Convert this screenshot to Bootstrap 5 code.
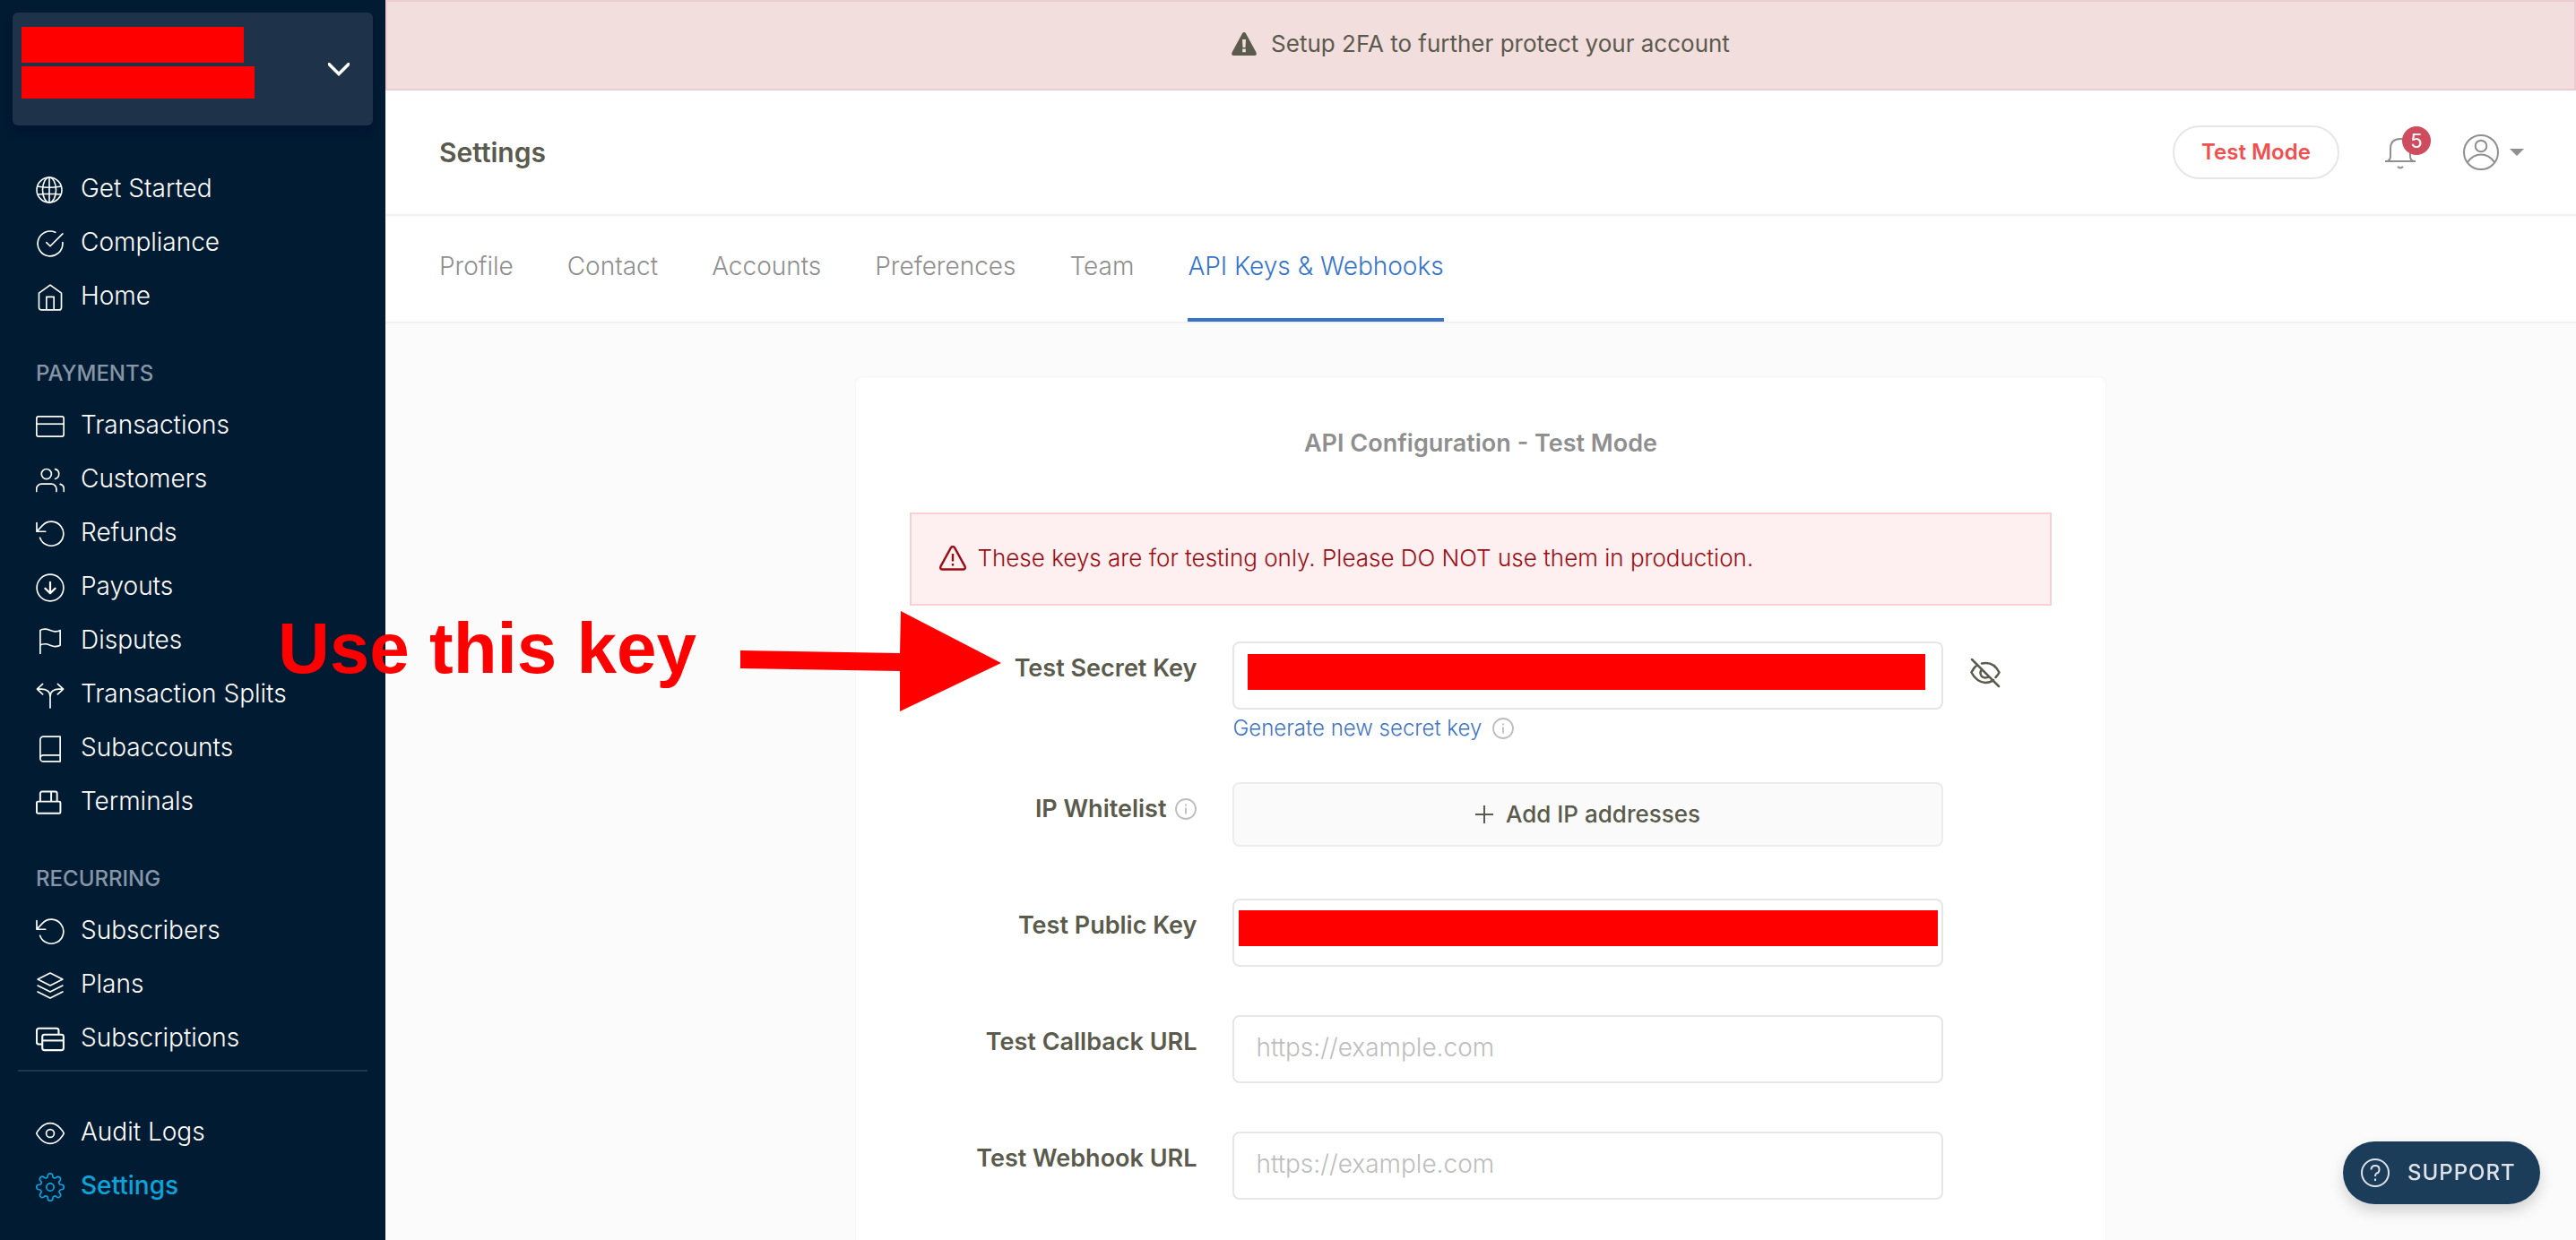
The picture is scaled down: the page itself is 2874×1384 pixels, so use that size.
<!DOCTYPE html>
<html lang="en">
<head>
<meta charset="utf-8">
<meta name="viewport" content="width=device-width, initial-scale=1">
<title>Settings</title>
<link href="https://cdn.jsdelivr.net/npm/bootstrap@5.3.0/dist/css/bootstrap.min.css" rel="stylesheet">
<style>
body{font-family:Inter,"Liberation Sans",sans-serif;font-size:26px;line-height:40px;color:#5a5a4d;background:#fbfbfb}
svg{fill:none;stroke:currentColor;flex:none;display:block}
svg.info{stroke:#bdbdbd}
a{text-decoration:none}
.side{width:430px;background:#011b33}
.biz{margin:14px;height:126px;padding:16px 26px 16px 10px;background:#1e334a;border:0;border-radius:6px;box-shadow:0 8px 10px rgba(0,0,40,.2)}
.redact{background:#f00}
.biz .redact{display:block;width:248px;height:40px}
.biz .redact + .redact{width:260px;height:36px;margin-top:4px}
.biz svg{margin-top:40px}
.side-nav{margin-top:26px}
.side-nav a{display:flex;align-items:center;height:60px;padding-left:40px;color:#fff;gap:18px;font-size:28px;font-weight:300}
.side-nav a svg{margin-top:3px}
.side-nav a.current{color:#0ba4db;font-weight:500}
.side-nav h6{margin:0;padding:43px 0 13px 40px;font-size:24px;line-height:28px;font-weight:500;color:#8696a7}
.side hr{margin:6px 20px 37px;border-top:2px solid #334a63;opacity:.6}
.notice{height:101px;border:2px solid #edccd1;background:#f2dedd;gap:16px;padding-bottom:3px}
.topbar{height:140px;border-bottom:2px solid #f2f2f2;padding:0 58px 0 60px;background:#fff}
.topbar h1{margin:0;font-size:30px;font-weight:600}
.mode{width:186px;height:60px;border:2px solid #e6e6e6;border-radius:30px;background:#fff;color:#f04f50;font-size:24px;font-weight:600;padding:0}
.gray{color:#8f8f8f}
.bell{margin:0 52px 0 50px;padding:2px 0 0;width:36px}
.bell .count{position:absolute;left:20px;top:-10px;width:32px;height:32px;border-radius:50%;background:#cf4b5e;color:#fff;font-size:22px;line-height:32px}
.tabs{height:120px;border-bottom:2px solid #f2f2f2;background:#fff;padding:0 60px;gap:60px;font-size:28px;font-weight:300}
.tabs a{color:#8f8f8f;padding-top:36px;border-bottom:4px solid transparent}
.tabs a.current{color:#3674c9;border-color:#3674c9}
.panel{width:57%;margin:60px auto 0;background:#fff;border-radius:8px;padding:54px 60px 120px;box-shadow:0 0 3px rgba(0,0,0,.06)}
.panel h2{margin:0 0 57px;font-size:27px;line-height:40px;font-weight:600;color:#8f8f8f}
.warnbox{height:104px;border:2px solid #fccfd2;background:#feeff0;color:#9c0d12;padding:0 31px 2px;gap:12px;margin-bottom:40px;font-weight:300}
.field{display:grid;grid-template-columns:320px 1fr 121px;margin-bottom:54px}
.field > label{font-size:27px;font-weight:600;padding-top:10px;display:flex;justify-content:flex-end;gap:10px;align-items:center;height:50px}
.mid{margin-left:40px;position:relative}
.mid input{height:76px;border:2px solid #e6e6e6;border-radius:8px;font-size:28px;font-weight:300;padding:0 24px 4px;background:#fff}
.mid input::placeholder{color:#bdbdbd}
.mid .redact{position:absolute;left:7px;right:6px;top:13px;height:40px}
.mid .redact.inset{left:17px;right:20px;top:14px}
.gen{font-size:24px;color:#3f74c6;gap:12px;height:41px;font-weight:300}
.addip{width:100%;height:72px;border:2px solid #ececec;border-radius:8px;background:#fafafa;color:#5a5a4d;font-weight:500;gap:14px}
.field.short{margin-bottom:58px}
.field.first{margin-bottom:40px}
.eye{margin:18px 0 0 30px;padding:0;border:0;background:none;color:#5a5a4d;align-self:start}
.support{position:fixed;right:40px;bottom:40px;width:220px;height:70px;border:0;border-radius:35px;background:#1c3d5a;color:#dfe3e8;font-size:24px;font-weight:500;letter-spacing:1px;gap:20px;padding:0 0 0 20px;box-shadow:0 8px 16px rgba(0,0,0,.16)}
.note{position:absolute;left:310px;top:678px;gap:49px;color:#f00;font:bold 80px/92px "Liberation Sans",Arial,sans-serif}
.note svg{margin-top:4px}
</style>
<script src="https://cdn.jsdelivr.net/npm/bootstrap@5.3.0/dist/js/bootstrap.bundle.min.js"></script>
</head>
<body>
<div class="d-flex vh-100 overflow-hidden position-relative">
<aside class="side flex-shrink-0 d-flex flex-column">
<button class="biz d-flex justify-content-between text-start" aria-label="Switch business"><span><span class="redact"></span><span class="redact"></span></span>
<svg class="text-white" width="24" height="16" viewBox="0 0 24 16" stroke-width="3.500" stroke-linecap="round"><path d="M1 1.500l11 11L23 1.500"/></svg></button>
<nav class="side-nav">
<a href="#"><svg width="32" height="32" viewBox="0 0 32 32" stroke-width="1.6"><circle cx="15" cy="16" r="14"/><ellipse cx="15" cy="16" rx="7.500" ry="14"/><path d="M15 2v28M2 12q13 2.500 26 0M2 21q13-1.500 26 0"/></svg>Get Started</a>
<a href="#"><svg width="32" height="32" viewBox="0.5 0.500 23 23" stroke-width="1.200" stroke-linecap="round" stroke-linejoin="round"><path d="M22 11v1a10 10 0 1 1-5.900-9.140M22 4L12 14l-3-3"/></svg>Compliance</a>
<a href="#"><svg width="32" height="32" viewBox="0.5 0.500 23 23" stroke-width="1.200" stroke-linejoin="round"><path d="M3 8.500L12 2l9 6.500V20a2 2 0 0 1-2 2H5a2 2 0 0 1-2-2zM9 22V11.500h6V22"/></svg>Home</a>
<h6>PAYMENTS</h6>
<a href="#"><svg width="32" height="32" viewBox="0.5 0.500 23 23" stroke-width="1.200"><rect x="1.100" y="4" width="21.800" height="16" rx="1.600"/><path d="M1 10h22"/></svg>Transactions</a>
<a href="#"><svg width="32" height="32" viewBox="0.5 0.500 23 23" stroke-width="1.200" stroke-linecap="round"><path d="M17 21v-2a4 4 0 0 0-4-4H5a4 4 0 0 0-4 4v2M23 21v-2a4 4 0 0 0-3-3.870M16 3.130a4 4 0 0 1 0 7.750"/><circle cx="9" cy="7" r="4"/></svg>Customers</a>
<a href="#"><svg width="32" height="32" viewBox="0.5 0.500 23 23" stroke-width="1.200" stroke-linecap="round" stroke-linejoin="round"><path d="M1.200 3v7h7M3.800 15a9.700 9.700 0 1 0 2.100-9.900L1.200 10"/></svg>Refunds</a>
<a href="#"><svg width="32" height="32" viewBox="0.5 0.500 23 23" stroke-width="1.200" stroke-linecap="round" stroke-linejoin="round"><circle cx="12" cy="12" r="10.700"/><path stroke-width="1.600" d="M12 7.500v9M8 12.500l4 4 4-4"/></svg>Payouts</a>
<a href="#"><svg width="32" height="32" viewBox="0.5 0.500 23 23" stroke-width="1.200" stroke-linejoin="round"><path d="M4 22V3s1-1 4-1 5 2 8 2 4-1 4-1v12s-1 1-4 1-5-2-8-2-4 1-4 1"/></svg>Disputes</a>
<a href="#"><svg width="32" height="32" viewBox="0.5 0.500 23 23" stroke-width="1.200" stroke-linecap="round" stroke-linejoin="round"><path d="M12 22v-9c0-4-3-6-7-6H1.500M12 13c0-4 3-6 7-6h3.500M6 3L1.500 7 6 11.200M18 3l4.500 4-4.500 4.200"/></svg>Transaction Splits</a>
<a href="#"><svg width="32" height="32" viewBox="0.5 0.500 23 23" stroke-width="1.200" stroke-linejoin="round"><path d="M4 19.500A2.500 2.500 0 0 1 6.500 17H20M6.500 2H20v20H6.500A2.500 2.500 0 0 1 4 19.500v-15A2.500 2.500 0 0 1 6.500 2z"/></svg>Subaccounts</a>
<a href="#"><svg width="32" height="32" viewBox="0.5 0.500 23 23" stroke-width="1.400"><rect x="1.200" y="11" width="19" height="9.500" rx="1"/><path d="M4 11V4.500a1.500 1.500 0 0 1 1.500-1.500h10.500a1.500 1.500 0 0 1 1.500 1.500V11M12.800 3v8"/></svg>Terminals</a>
<h6>RECURRING</h6>
<a href="#"><svg width="32" height="32" viewBox="0.5 0.500 23 23" stroke-width="1.200" stroke-linecap="round" stroke-linejoin="round"><path d="M1.200 3v7h7M3.800 15a9.700 9.700 0 1 0 2.100-9.900L1.200 10"/></svg>Subscribers</a>
<a href="#"><svg width="32" height="32" viewBox="0.5 0.500 23 23" stroke-width="1.200" stroke-linecap="round" stroke-linejoin="round"><path d="M12 2L2 7l10 5 10-5zM2 17l10 5 10-5M2 12l10 5 10-5"/></svg>Plans</a>
<a href="#"><svg width="32" height="32" viewBox="0.5 0.500 23 23" stroke-width="1.500"><path d="M5.500 16H3a1.800 1.800 0 0 1-1.800-1.800V5A1.800 1.800 0 0 1 3 3.200h14A1.800 1.800 0 0 1 18.800 5v3"/><rect x="5.700" y="8.200" width="17" height="12.500" rx="1.700"/><path d="M5.700 13h17"/></svg>Subscriptions</a>
<hr>
<a href="#"><svg width="32" height="32" viewBox="0.5 0.500 23 23" stroke-width="1.200"><path d="M1 12s4-8.200 11-8.200S23 12 23 12s-4 8.200-11 8.200S1 12 1 12z"/><circle cx="12" cy="12" r="3.200"/></svg>Audit Logs</a>
<a href="#" class="current"><svg width="32" height="32" viewBox="0.5 0.500 23 23" stroke-width="1.200"><circle cx="12" cy="12" r="3"/><path d="M19.400 15a1.650 1.650 0 0 0 .33 1.820l.06.06a2 2 0 1 1-2.830 2.830l-.06-.06a1.650 1.650 0 0 0-2.800 1.170V21a2 2 0 0 1-4 0v-.09a1.650 1.650 0 0 0-2.900-1.260l-.06.06a2 2 0 1 1-2.830-2.830l.06-.06A1.650 1.650 0 0 0 3.090 14H3a2 2 0 0 1 0-4h.09a1.650 1.650 0 0 0 1.260-2.900l-.06-.06a2 2 0 1 1 2.830-2.830l.06.06A1.650 1.650 0 0 0 10 3.090V3a2 2 0 0 1 4 0v.09a1.650 1.650 0 0 0 2.820 1.180l.06-.06a2 2 0 1 1 2.830 2.830l-.06.06A1.650 1.650 0 0 0 20.910 10H21a2 2 0 0 1 0 4h-.09a1.650 1.650 0 0 0-1.510 1z"/></svg>Settings</a>
</nav>
</aside>
<main class="flex-grow-1">
<div class="notice d-flex align-items-center justify-content-center"><svg width="28" height="26" viewBox="0 0 28 26"><path fill="currentColor" stroke="none" fill-rule="evenodd" d="M14 0q1.200 0 1.800 1.100L27.500 22.500Q28.500 26 26 26H2Q-.5 26 .5 22.500L12.200 1.100Q12.800 0 14 0zM12 8l.5 9h3l.5-9zM12.200 18.500v3.700h3.600v-3.700z"/></svg><span>Setup 2FA to further protect your account</span></div>
<header class="topbar d-flex align-items-center">
<h1 class="me-auto">Settings</h1>
<button class="mode">Test Mode</button>
<button class="bell btn border-0 position-relative gray" aria-label="Notifications"><svg width="36" height="36" viewBox="0 0 36 36" stroke-width="2"><path d="M1 27h34M3 27q4-1 4-6v-8Q7 2 18 2t11 11v8q0 5 4 6M15 33q3 3 6 0"/></svg><span class="count">5</span></button>
<a href="#" class="gray d-flex align-items-center gap-2" aria-label="Account"><svg width="40" height="40" viewBox="0 0 40 40" stroke-width="2"><circle cx="20" cy="20" r="19"/><circle cx="20" cy="13" r="6.300"/><path d="M5 31q6-8.500 15-8.500T35 31"/></svg><svg class="ms-1" width="16" height="8" viewBox="0 0 16 8"><path fill="currentColor" stroke="none" d="M0 0h16L8 8z"/></svg></a>
</header>
<nav class="tabs d-flex"><a href="#">Profile</a><a href="#">Contact</a><a href="#">Accounts</a><a href="#">Preferences</a><a href="#">Team</a><a href="#" class="current">API Keys &amp; Webhooks</a></nav>
<section class="panel">
<h2 class="text-center">API Configuration - Test Mode</h2>
<div class="warnbox d-flex align-items-center"><svg width="30" height="28" viewBox="0 0 30 28" stroke-width="2.400" stroke-linejoin="round"><path d="M13 2.200q2-2.400 4 0l11.500 21q1 3-1.500 3.300H3q-2.500-.3-1.500-3.300zM15 9v8.500M15 20v2.500"/></svg>These keys are for testing only. Please DO NOT use them in production.</div>
<form>
<div class="field first"><label for="sk">Test Secret Key</label><div class="mid"><input class="form-control" id="sk" type="password"><span class="redact inset"></span>
<div class="gen d-flex align-items-center"><a href="#" class="text-reset">Generate new secret key</a><svg class="info" width="24" height="24" viewBox="0 0 24 24" stroke-width="1.800"><circle cx="12" cy="12" r="11"/><path d="M12 10.500v7M12 6.500v2"/></svg></div></div>
<button type="button" class="eye" aria-label="Show key"><svg width="34" height="34" viewBox="0 0 34 34" stroke-width="2.500" stroke-linecap="round"><path d="M2 2l30 30M8 8Q4 11 1.500 16.500 7 27 17 28q5 0 9-3M13 6.500Q26 3.500 32.500 16.500q-1.500 3-4 5.500M13 13q-3 4 0 8 4 3 8 0"/></svg></button></div>
<div class="field short"><label for="ip">IP Whitelist <svg class="info" width="24" height="24" viewBox="0 0 24 24" stroke-width="1.800"><circle cx="12" cy="12" r="11"/><path d="M12 10.500v7M12 6.500v2"/></svg></label><div class="mid"><button type="button" id="ip" class="addip d-flex align-items-center justify-content-center"><svg width="20" height="20" viewBox="0 0 20 20" stroke-width="2"><path d="M10 0v20M0 10h20"/></svg>Add IP addresses</button></div></div>
<div class="field"><label for="pk">Test Public Key</label><div class="mid"><input class="form-control" id="pk" type="text"><span class="redact"></span></div></div>
<div class="field"><label for="cb">Test Callback URL</label><div class="mid"><input class="form-control" id="cb" type="url" placeholder="https://example.com"></div></div>
<div class="field"><label for="wh">Test Webhook URL</label><div class="mid"><input class="form-control" id="wh" type="url" placeholder="https://example.com"></div></div>
</form>
</section>
</main>
<div class="note d-flex"><span>Use this key</span><svg width="291" height="112" viewBox="0 0 291 112"><path fill="currentColor" stroke="none" d="M0 44l178 3L179 0l112 58-113 54V67L0 64z"/></svg></div>
</div>
<button class="support d-flex align-items-center"><svg width="32" height="32" viewBox="0 0 32 32" stroke-width="2"><circle cx="16" cy="16" r="15"/><path d="M11.500 12.500q0-4.500 4.500-4.500t4.500 4-3 4.500q-1.500 1-1.500 3.500M16 22.500v2.500"/></svg>SUPPORT</button>
</body>
</html>
